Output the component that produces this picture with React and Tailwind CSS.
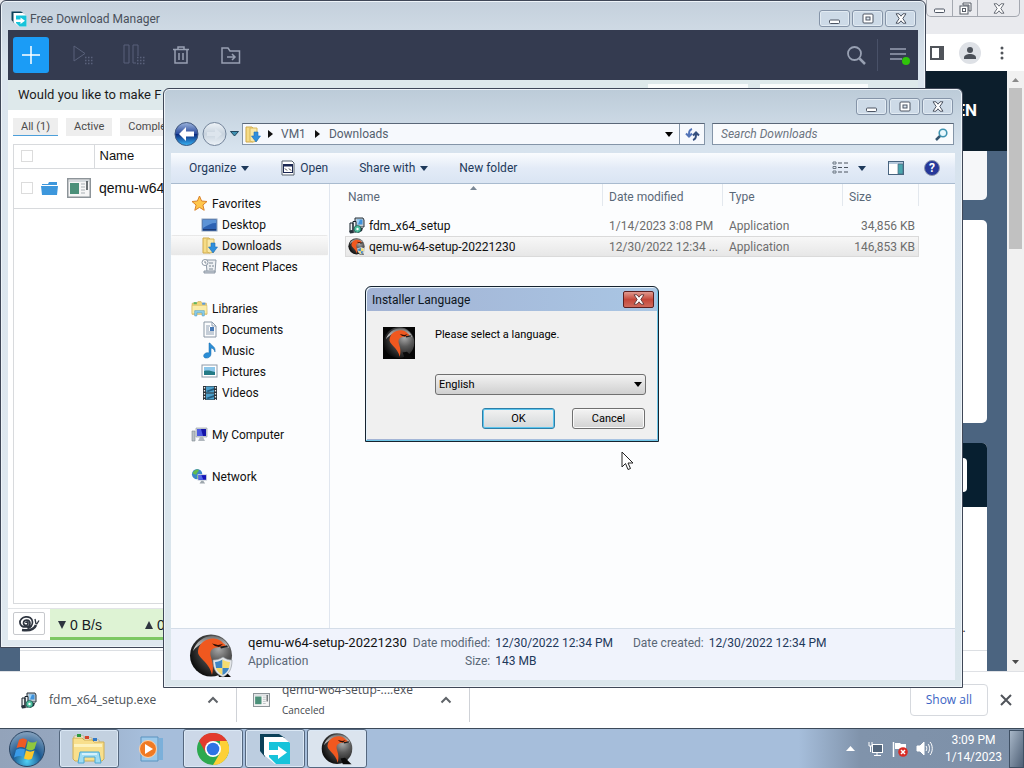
import React from "react";

const QemuLogo = ({ size, shield, square }) => (
  <svg width={size} height={size} viewBox="0 0 44 44" aria-hidden="true" className="shrink-0">
    <defs>
      <radialGradient id="qemuBall" cx="0.68" cy="0.35" r="0.7">
        <stop offset="0" stopColor="#a8a8a8" />
        <stop offset="0.4" stopColor="#5a5a5a" />
        <stop offset="1" stopColor="#101010" />
      </radialGradient>
      <linearGradient id="qemuShine" x2="0" y2="1">
        <stop offset="0" stopColor="#6f6f6f" />
        <stop offset="1" stopColor="#e6e6e6" />
      </linearGradient>
    </defs>
    {square && <rect width="44" height="44" fill="#050505" />}
    <circle cx="22" cy="21.500" r="21" fill="url(#qemuBall)" />
    <path d="M4 17C7 7 16 1.500 24 2c8 .6 14 5 16 12-3-2-5-3-7-4-9-5-21-3-29 7z" fill="url(#qemuShine)" />
    <path d="M27 35l6-1 9 9H30z" fill="#0a0a0a" />
    <path d="M9 17C10 9 17 4 25 4.500c4 .3 7 2 9 4.500l3 2.500-6 1.500c-5 .3-8.500 1.500-9.500 5-.8 3 1 6 2 11 .8 4 .5 8-.5 12-1.500-7-5-11-9-15-3.500-3.500-5.500-6-5-9z" fill="#f0581f" />
    <path d="M23 9.500l6 1.500 5-1-4 3-4-1z" fill="#2a0d05" />
    <path d="M31 12.500c3-.3 5-.6 7-1.200l1 1.500-7 1.800z" fill="#1c1c1c" />
    {shield && (
      <g>
        <path d="M24 26c4 0 7-1 10-3 3 2 5 3 9 3 0 9-3 14-9 17-7-3-10-8-10-17z" fill="#e4e6e8" stroke="#8b9299" strokeWidth=".6" />
        <path d="M26 28c3 0 5-1 7.500-2.500V34H27z" fill="#3f86c4" />
        <path d="M33.500 25.500c2 1.500 4.500 2.500 7.500 2.500l-1 6h-6.500z" fill="#f5dc70" />
        <path d="M27 34h6.500v7c-3-1.500-5.500-4-6.500-7z" fill="#f5dc70" />
        <path d="M33.500 34H40c-1 3-3 5.500-6.500 7z" fill="#3f86c4" />
      </g>
    )}
  </svg>
);

const FdmLogo = ({ size }) => (
  <svg width={size} height={size} viewBox="0 0 32 32" aria-hidden="true" className="shrink-0">
    <path d="M1 1h19l6 4H6v19l-5-6z" fill="#0b4058" />
    <path d="M5 4h19l7 6v21H16L5 22z" fill="#fff" />
    <path d="M10 9h20l1 1v21H17l-7-7z" fill="#17c3da" />
    <path d="M10 17h9v-4l9 6.500-9 6.500v-4h-9z" fill="#fff" />
  </svg>
);

const FolderDown = () => (
  <svg width="16" height="17" viewBox="0 0 16 17" aria-hidden="true" className="shrink-0">
    <path d="M1 1h6l1 1v14H1z" fill="#f6dc86" stroke="#d0a94a" />
    <path d="M5 2h7v13l-4 1-3-1z" fill="#f9e8a8" stroke="#d7b75b" />
    <path d="M9 6h4v4h2.500l-4.500 6-4.500-6H9z" fill="#2f8fdd" stroke="#1e6fb8" strokeWidth=".6" />
  </svg>
);

const Star = () => (
  <svg width="17" height="17" viewBox="0 0 17 17" aria-hidden="true">
    <path d="M8.500 1l2.100 5 5.400.5-4.100 3.500 1.300 5.300-4.700-2.900-4.700 2.900 1.300-5.300L1 6.500 6.400 6z" fill="#ffc64b" stroke="#d9822b" />
  </svg>
);

const DesktopIcon = () => (
  <svg width="17" height="16" viewBox="0 0 17 16" aria-hidden="true">
    <rect x="1" y="2" width="15" height="12" fill="#2d62b3" stroke="#8ba0b8" />
    <path d="M2 3h13v3c-5 0-8 2-13 5z" fill="#5c93d6" />
    <path d="M2 12h13v1.500H2z" fill="#1b3b78" />
  </svg>
);

const RecentIcon = () => (
  <svg width="17" height="17" viewBox="0 0 17 17" aria-hidden="true">
    <path d="M5 2h10l-1 12H6z" fill="#edf0f3" stroke="#8d98a5" />
    <circle cx="4" cy="4.500" r="3" fill="#fff" stroke="#8d98a5" />
    <path d="M4 3v2h1.500M8 5h4M8 8h2M11 8h2M8 11h4" stroke="#7d8894" fill="none" />
    <path d="M3 13h11v2H3z" fill="#c9d0d8" stroke="#8d98a5" />
  </svg>
);

const LibrariesIcon = () => (
  <svg width="17" height="17" viewBox="0 0 32 32" aria-hidden="true">
    <path d="M2 6h9l2-3h6l1 3h9l1 21H2z" fill="#f1d577" stroke="#c9a244" />
    <path d="M5 4h6v4H5z" fill="#63b35c" />
    <path d="M21 5h6v4h-6z" fill="#5d9bdb" />
    <path d="M2 10h28v16H2z" fill="#fbeca9" stroke="#d6b558" />
    <path d="M7 30V20h18v10h-4v-6H11v6z" fill="#8fd0ee" stroke="#3d93c3" />
  </svg>
);

const ExplorerIcon = () => (
  <svg width="34" height="31" viewBox="0 0 34 31" aria-hidden="true">
    <path d="M2 3h10v4H2zM10 5h10v4H10zM17 7h10v4H17z" fill="#fff" stroke="#b5a878" strokeWidth=".8" />
    <path d="M5 1h4v3H5z" fill="#2c9a3f" />
    <path d="M13 3h4v3h-4z" fill="#d4452c" />
    <path d="M21 5h4v3h-4z" fill="#2f78c8" />
    <path d="M1 5h9l2 2h8l2 2h10v17l-2 2H3l-2-2z" fill="#f8df8c" stroke="#cfae55" />
    <path d="M2 11h28v3H2z" fill="#fdf2bd" />
    <path d="M6 30l2-11h19l2 11h-6v-6H12v6z" fill="#9fdcf3" stroke="#4aa8d3" />
    <path d="M10 21h15" stroke="#e7f8fe" strokeWidth="1.500" />
  </svg>
);

const DocumentsIcon = () => (
  <svg width="16" height="17" viewBox="0 0 16 17" aria-hidden="true">
    <path d="M2 1h8l4 4v11H2z" fill="#fbfcfd" stroke="#8a97a5" />
    <path d="M10 1v4h4M4 5h4M4 7h3M4 9h3M4 11h8M4 13h8" stroke="#8fa0b3" fill="none" />
    <path d="M8 6h4v4H8z" fill="#4779b5" />
  </svg>
);

const MusicIcon = () => (
  <svg width="16" height="17" viewBox="0 0 16 17" aria-hidden="true">
    <path d="M8 1c1 3 6 3 5 9-1-3-2-3.500-4-4v6c0 3-3 4.500-5.500 4S1 12 4 11c1-.5 2-.5 3 0V1z" fill="#2b8ed6" stroke="#1969a8" strokeWidth=".5" />
  </svg>
);

const PicturesIcon = () => (
  <svg width="17" height="15" viewBox="0 0 17 15" aria-hidden="true">
    <rect x="1" y="1" width="15" height="12" fill="#fff" stroke="#8b99a8" />
    <path d="M3 3h11v5H3z" fill="#8cc7ea" />
    <path d="M3 7c4-1 7 0 11 1v3H3z" fill="#237a86" />
  </svg>
);

const VideosIcon = () => (
  <svg width="16" height="16" viewBox="0 0 16 16" aria-hidden="true">
    <rect x="1" y="1" width="14" height="14" fill="#2c3238" />
    <path d="M4 1.500h8v6H4zM4 8.500h8v6H4z" fill="#4d9fca" />
    <path d="M2.500 2v13M13.500 2v13" stroke="#e8ecef" strokeWidth="1.300" strokeDasharray="1.500 1.500" />
    <path d="M4 6l8-3v2L6 7zM4 13l8-3v2l-6 2z" fill="#215a7c" />
  </svg>
);

const ComputerIcon = () => (
  <svg width="17" height="16" viewBox="0 0 17 16" aria-hidden="true">
    <path d="M1 4h3v10H1z" fill="#b9c0c6" stroke="#7e878f" strokeWidth=".6" />
    <path d="M5 1h11v9H5z" fill="#d5dade" stroke="#8a939b" strokeWidth=".6" />
    <path d="M6 2h9v7H6z" fill="#1414a8" />
    <path d="M6 2h4l2 7H6z" fill="#4d5be0" />
    <path d="M9 10h3l2 4H7z" fill="#b1b8be" />
  </svg>
);

const NetworkIcon = () => (
  <svg width="17" height="17" viewBox="0 0 18 17" aria-hidden="true">
    <circle cx="6.500" cy="6" r="5.500" fill="#3b86c9" />
    <path d="M2 4c2-3 5-3 6-3 1 2-2 3-2 5-2 1-4 0-4-2zM6 8c2-1 4 0 4 2l-3 1z" fill="#63bd4c" />
    <path d="M7 6h10v7H7z" fill="#cfd6dc" />
    <path d="M8 7h8v5H8z" fill="#1414b8" />
    <path d="M8 7h3l2 5H8z" fill="#5369e6" />
    <path d="M11 13h2l2 3H9z" fill="#9da6ad" />
  </svg>
);

const InstallerIcon = ({ size = 17 }) => (
  <svg width={size} height={size} viewBox="0 0 17 17" aria-hidden="true" className="shrink-0">
    <path d="M7 1h8l1 2v7H7z" fill="#c3cdd4" stroke="#26323c" />
    <path d="M9 2.500h5.500v5H9z" fill="#3f93dd" />
    <path d="M9 2.500h3l-2 5H9z" fill="#9bd0f5" />
    <path d="M2 6h3v8H2zM5 4.500h3V15H5z" fill="#eef1f2" stroke="#15202a" />
    <path d="M1 14l3-1 2 3-4 .5zM11 11h4l-1 3-4 2z" fill="#26323c" />
    <circle cx="9.500" cy="12" r="3.500" fill="#4fc0a0" stroke="#1d5c52" strokeWidth=".8" />
    <circle cx="9.500" cy="12" r="1.200" fill="#fff" />
  </svg>
);

const AppPage = ({ w = 17, h = 14 }) => (
  <svg width={w} height={h} viewBox="0 0 24 20" preserveAspectRatio="none" aria-hidden="true" className="shrink-0">
    <rect x=".75" y=".75" width="22.500" height="18.500" fill="#f6f6f6" stroke="#8d9499" strokeWidth="1.500" />
    <path d="M2 2h20v2H2z" fill="#d6dbde" />
    <path d="M3 5h9v11H3z" fill="#4b9079" />
    <path d="M14 6h4M14 9h4M14 12h4M14 15h4" stroke="#aab1b5" />
    <path d="M20 3v9" stroke="#3d4449" strokeWidth="1.500" />
  </svg>
);

const Caret = ({ className = "text-[#1e395b]" }) => (
  <svg width="8" height="5" viewBox="0 0 8 5" aria-hidden="true" className={className}>
    <path d="M0 0h8L4 5z" fill="currentColor" />
  </svg>
);

const RightCaret = () => (
  <svg width="5" height="8" viewBox="0 0 5 8" aria-hidden="true">
    <path d="M0 0l5 4-5 4z" fill="#111" />
  </svg>
);

const MinGlyph = () => (
  <svg width="13" height="12" viewBox="0 0 13 12" aria-hidden="true">
    <rect x="1.500" y="7" width="10" height="3.500" rx="1" fill="#fff" stroke="#4d5563" />
  </svg>
);
const MaxGlyph = () => (
  <svg width="12" height="11" viewBox="0 0 12 11" aria-hidden="true">
    <rect x="1" y="1" width="10" height="9" rx="1" fill="#fff" stroke="#4d5563" />
    <rect x="4" y="4" width="4" height="3" fill="#dce6f0" stroke="#4d5563" />
  </svg>
);
const CloseGlyph = ({ stroke = "#4d5563" }) => (
  <svg width="12" height="11" viewBox="0 0 12 11" aria-hidden="true">
    <path d="M1 .8h3l2 2.400L8 .8h3L7.800 5.500l3.200 4.700H8L6 7.800l-2 2.400H1l3.200-4.700z" fill="#fff" stroke={stroke} />
  </svg>
);
const RestoreGlyph = () => (
  <svg width="13" height="13" viewBox="0 0 13 13" aria-hidden="true">
    <path d="M4 1h8v8h-2V3H4z" fill="#fff" stroke="#565c66" />
    <rect x="1" y="4" width="8" height="8" fill="#fff" stroke="#565c66" />
    <rect x="3.500" y="6.500" width="3" height="3" fill="none" stroke="#565c66" />
  </svg>
);

const frameButton =
  "flex h-[17px] w-[31px] items-center justify-center rounded-[3px] border border-[#8594a8] bg-[#cddae7] shadow-[inset_0_0_0_1px_#e2ebf3]";

const FrameButtons = () => (
  <div className="flex gap-[2px]">
    <button type="button" aria-label="Minimize" className={frameButton}><MinGlyph /></button>
    <button type="button" aria-label="Maximize" className={frameButton}><MaxGlyph /></button>
    <button type="button" aria-label="Close" className={frameButton}><CloseGlyph /></button>
  </div>
);

function BrowserWindow() {
  return (
    <div className="flex min-h-0 flex-1 flex-col bg-white">
      <div className="flex h-[34px] shrink-0 items-start justify-end bg-[#e9eaee] pr-1">
        <div className="flex h-[17px] rounded-b-[5px] border border-t-0 border-[#a4a8b0] text-[#565c66]">
          <button type="button" aria-label="Minimize browser" className="flex w-[25px] items-center justify-center"><MinGlyph /></button>
          <button type="button" aria-label="Restore browser" className="flex w-[26px] items-center justify-center border-x border-[#a4a8b0]"><RestoreGlyph /></button>
          <button type="button" aria-label="Close browser" className="flex w-[41px] items-center justify-center"><CloseGlyph stroke="#6a6f78" /></button>
        </div>
      </div>
      <div className="flex h-[37px] shrink-0 items-center justify-end gap-[15px] pr-5">
        <button type="button" aria-label="Side panel">
          <svg width="14" height="14" viewBox="0 0 14 14"><rect x="1" y="1" width="12" height="12" fill="#fff" stroke="#50545a" strokeWidth="2" /><path d="M9 1h4v12H9z" fill="#50545a" /></svg>
        </button>
        <button type="button" aria-label="Profile" className="flex size-[22px] items-center justify-center rounded-full bg-[#dee1e6]">
          <svg width="14" height="14" viewBox="0 0 14 14"><circle cx="7" cy="4" r="3" fill="#4b5058" /><path d="M1 12c0-3 3-4 6-4s6 1 6 4v1H1z" fill="#4b5058" /></svg>
        </button>
        <button type="button" aria-label="Browser menu" className="pl-[4px]">
          <svg width="4" height="14" viewBox="0 0 4 14"><circle cx="2" cy="2" r="1.500" fill="#50545a" /><circle cx="2" cy="7" r="1.500" fill="#50545a" /><circle cx="2" cy="12" r="1.500" fill="#50545a" /></svg>
        </button>
      </div>
      <div className="flex min-h-0 flex-1">
        <div className="flex min-w-0 flex-1 flex-col overflow-hidden bg-[#4b6480]">
          <div className="flex h-20 shrink-0 items-center justify-end bg-[#0c1e2c] pr-[30px] text-[17px] font-bold text-white">EN</div>
          <div className="flex flex-1 flex-col gap-5 pr-5 pl-5">
            <div className="h-[49px] shrink-0 rounded-b-[5px] bg-[#f6f7f9]" />
            <div className="h-[203px] shrink-0 rounded-[5px] bg-white" />
            <div className="flex flex-1 flex-col overflow-hidden rounded-t-[5px] bg-white">
              <div className="flex h-16 shrink-0 items-center justify-end bg-[#071f30] pr-5">
                <div className="h-[34px] w-24 rounded-[4px] bg-white" />
              </div>
              <div className="flex flex-1 items-end justify-end border-b border-[#dcdfe3] pr-[21px] pb-[12px] text-[14px] text-[#333]">.</div>
              <div className="h-5 shrink-0" />
            </div>
          </div>
        </div>
        <div className="flex w-[17px] shrink-0 flex-col items-center bg-[#f1f1f1]">
          <svg width="9" height="17" viewBox="0 0 9 17"><path d="M1 11l3.500-4L8 11z" fill="#8b8b8b" /></svg>
          <div className="h-[161px] w-[13px] bg-[#c1c1c1]" />
          <svg width="9" height="17" viewBox="0 0 9 17" className="mt-auto"><path d="M1 6h7l-3.500 4z" fill="#4a4a4a" /></svg>
        </div>
      </div>
      <div className="flex h-[57px] shrink-0 items-center border-t border-[#dfe1e5] pr-[12px] font-['Open_Sans',sans-serif] text-[12px] text-[#4c5157]">
        <div className="my-[7px] flex h-[44px] w-[237px] items-center border-r border-[#cfd2d7] pr-[17px] pl-5">
          <InstallerIcon />
          <a href="#fdm" className="ml-[12px] flex-1">fdm_x64_setup.exe</a>
          <button type="button" aria-label="Options for fdm_x64_setup.exe">
            <svg width="12" height="8" viewBox="0 0 12 8"><path d="M1.500 6.500L6 2l4.500 4.500" fill="none" stroke="#5f6368" strokeWidth="2" /></svg>
          </button>
        </div>
        <div className="flex h-[44px] w-[233px] items-center border-r border-[#cfd2d7] pr-[17px] pl-4">
          <AppPage w={17} h={14} />
          <div className="ml-[12px] flex flex-1 flex-col">
            <a href="#qemu" className="leading-5">qemu-w64-setup-....exe</a>
            <span className="text-[10px] leading-5 text-[#44484d]">Canceled</span>
          </div>
          <button type="button" aria-label="Options for qemu setup">
            <svg width="12" height="8" viewBox="0 0 12 8"><path d="M1.500 6.500L6 2l4.500 4.500" fill="none" stroke="#5f6368" strokeWidth="2" /></svg>
          </button>
        </div>
        <button type="button" className="ml-auto h-8 rounded-[4px] border border-[#d6d9de] px-[15px] text-[#3b64c4]">Show all</button>
        <button type="button" aria-label="Close downloads bar" className="ml-[12px]">
          <svg width="12" height="12" viewBox="0 0 12 12"><path d="M1 1l10 10M11 1L1 11" stroke="#50545a" strokeWidth="2" /></svg>
        </button>
      </div>
    </div>
  );
}

const fdmTab = "h-[18px] bg-[#eeeeee] px-[8px] text-[11px] leading-[18px] text-[#4b4b4b]";

function DownloadManager() {
  return (
    <section aria-label="Free Download Manager" className="absolute top-0 right-[98px] bottom-[120px] left-0 flex flex-col overflow-hidden rounded-t-[6px] border border-[#3f4757] bg-linear-to-b from-[#c4d0dc] via-[#dbe5ee] via-10% to-[#dfe8ef] px-[7px] pb-[7px] shadow-[inset_0_0_0_1px_#eef4f9]">
      <header className="flex h-[29px] shrink-0 items-center pr-[2px]">
        <div className="ml-[3px] flex items-center gap-[3px] pt-[6px]">
          <FdmLogo size={16} />
          <h2 className="text-[12px] text-[#4a515c]">Free Download Manager</h2>
        </div>
        <div className="ml-auto pt-[6px]"><FrameButtons /></div>
      </header>
      <div className="flex h-[50px] shrink-0 items-center bg-[#343b50] pr-[8px] pl-[5px]">
        <button type="button" aria-label="Add download" className="flex size-9 items-center justify-center rounded-[3px] bg-[#1b9cf6]">
          <svg width="18" height="18" viewBox="0 0 18 18"><path d="M9 0v18M0 9h18" stroke="#fff" strokeWidth="1.500" /></svg>
        </button>
        <button type="button" aria-label="Start" className="ml-[24px]">
          <svg width="20" height="22" viewBox="0 0 20 22" fill="none" stroke="#59617a"><path d="M1 2v15l11-7.500z" /><path d="M12 13.500h8M12 16.500h8M12 19.500h8" strokeWidth="1.500" strokeDasharray="1.500 1.500" /></svg>
        </button>
        <button type="button" aria-label="Pause" className="ml-[30px]">
          <svg width="22" height="22" viewBox="0 0 22 22" fill="none" stroke="#59617a"><path d="M1 1h5v18H1zM10 19V1h5v11M10 19h3" /><path d="M14 13.500h8M14 16.500h8M14 19.500h8" strokeWidth="1.500" strokeDasharray="1.500 1.500" /></svg>
        </button>
        <button type="button" aria-label="Delete" className="ml-[28px]">
          <svg width="16" height="18" viewBox="0 0 16 18" fill="none" stroke="#98a0b2" strokeWidth="1.500"><path d="M0 3.500h16M5 3V1h6v2M2 4v13h12V4M6 7v7M10 7v7" /></svg>
        </button>
        <button type="button" aria-label="Move to folder" className="ml-[32px]">
          <svg width="20" height="17" viewBox="0 0 20 17" fill="none" stroke="#98a0b2" strokeWidth="1.500"><path d="M1 16V1h6l2 3h9.500v12zM6 10h8M11 7l3 3-3 3" /></svg>
        </button>
        <button type="button" aria-label="Search downloads" className="ml-auto">
          <svg width="19" height="19" viewBox="0 0 19 19" fill="none" stroke="#98a0b2"><circle cx="7.500" cy="7.500" r="6.500" strokeWidth="1.800" /><path d="M12.500 12.500l5.500 5.500" strokeWidth="2.500" /></svg>
        </button>
        <div className="mr-[12px] ml-[11px] h-8 w-px bg-[#495168]" />
        <button type="button" aria-label="Menu">
          <svg width="20" height="20" viewBox="0 0 20 20"><path d="M0 4h16M0 9h16M0 14h12" stroke="#98a0b2" strokeWidth="1.500" /><circle cx="16" cy="16" r="4" fill="#2fc40a" /></svg>
        </button>
      </div>
      <div className="flex h-[30px] shrink-0 items-start justify-between bg-[#dee9eb] pr-[50px] pl-[10px] text-[13px] leading-[30px] text-[#1c1c1c]">
        <p className="whitespace-nowrap">Would you like to make F</p>
        <div className="flex gap-[12px] pt-1">
          <button type="button" aria-label="Yes" className="h-5 w-[100px] bg-[#fafcfc]" />
          <button type="button" aria-label="No" className="h-5 w-[108px] bg-[#fafcfc]" />
        </div>
      </div>
      <div className="flex min-h-0 flex-1 flex-col bg-white px-[5px] pt-[8px]">
        <div className="flex gap-[8px] whitespace-nowrap">
          <button type="button" className={fdmTab + " border-b border-[#4c9fda]"}>All (1)</button>
          <button type="button" className={fdmTab}>Active</button>
          <button type="button" className={fdmTab}>Complete</button>
        </div>
        <div className="mt-2 flex-1 border border-[#d8dadd]">
          <table className="w-full text-left font-['Liberation_Sans',sans-serif] text-[14px] text-[#111]">
            <thead>
              <tr className="h-[23px] border-b border-[#d8dadd]">
                <th className="w-[80px] border-r border-[#d8dadd] pl-[7px]"><input type="checkbox" aria-label="Select all" className="block size-3 appearance-none border border-[#dcdcdc]" /></th>
                <th className="pl-[5px] text-[13px] leading-[22px] font-normal">Name</th>
              </tr>
            </thead>
            <tbody>
              <tr className="h-10 border-b border-[#d8dadd]">
                <td className="pl-[7px]">
                  <div className="flex items-center">
                    <input type="checkbox" aria-label="Select qemu-w64-setup" className="size-3 appearance-none border border-[#dcdcdc]" />
                    <svg width="18" height="16" viewBox="0 0 18 16" className="ml-[8px]" aria-hidden="true"><path d="M1 4h6l1-2h8v3H1zM0 6h17l-1 9H1z" fill="#3d97dc" /></svg>
                    <span className="ml-[8px]"><AppPage w={24} h={20} /></span>
                  </div>
                </td>
                <td className="pl-[5px] whitespace-nowrap">qemu-w64</td>
              </tr>
            </tbody>
          </table>
        </div>
        <div className="-mx-[5px] mt-1 flex h-[32px] shrink-0 items-start border-t border-[#e2e4e7] pl-[5px]">
          <button type="button" aria-label="Snail mode" className="mt-[3px] flex h-[23px] w-8 items-center justify-center rounded-[2px] border border-[#c7c9cd] bg-white">
            <svg width="22" height="17" viewBox="0 0 22 17" fill="none" stroke="#2e3540"><path d="M8 8c0-1.500 2-1 2 .5 0 2.500-4.500 2.500-4.500-.5C5.500 4 12 4 12 8.500 12 13 3 13.500 2 8 1 1 14-1 14.500 7c0 3-2 5.500-5 6.500" strokeWidth="1.700" /><path d="M4 15c7 1 12 0 14-5" strokeWidth="2.500" /><path d="M18 9l-1-5M18.500 9.500l2.500-4" strokeWidth="1.300" /></svg>
          </button>
          <div className="ml-[5px] flex h-[31px] flex-1 items-center border-b-[3px] border-[#7cc862] bg-[#def3d4] pt-[4px] pl-[8px] font-['Liberation_Sans',sans-serif] text-[14px] text-[#15191f]">
            <svg width="8" height="8" viewBox="0 0 8 8" className="mr-[4px]" aria-hidden="true"><path d="M0 0h8L4 8z" fill="#2e3540" /></svg>0 B/s
            <svg width="8" height="8" viewBox="0 0 8 8" className="mr-[4px] ml-[43px]" aria-hidden="true"><path d="M0 8h8L4 0z" fill="#2e3540" /></svg>0 B/s
          </div>
        </div>
      </div>
    </section>
  );
}

const navItem = "flex h-[21px] items-center gap-[4px] border border-transparent text-[12px] text-[#111]";

const NavRow = ({ icon, label, level = 1, active }) => (
  <a href={"#" + label} className={navItem + (level === 1 ? " pl-[29px]" : " pl-[19px]") + (active ? " rounded-[2px] border-[#dcdcdc] bg-linear-to-b from-[#fafafa] to-[#e8e8e8]" : "")}>
    <span className="flex w-[17px] justify-center">{icon}</span>
    {label}
  </a>
);

const files = [
  { name: "fdm_x64_setup", date: "1/14/2023 3:08 PM", size: "34,856 KB", icon: <InstallerIcon /> },
  { name: "qemu-w64-setup-20221230", date: "12/30/2022 12:34 ...", size: "146,853 KB", icon: <QemuLogo size={17} shield />, selected: true },
];

const th = "relative border-r border-[#e3e8ee] pt-[4px] font-normal";

function Explorer() {
  return (
    <section aria-label="Downloads" className="absolute top-[88px] right-[61px] bottom-[80px] left-[163px] flex flex-col overflow-hidden rounded-t-[6px] border border-[#3f4757] bg-linear-to-b from-[#bccbd8] via-[#d7e3ee] via-10% to-[#dbe6ec] px-[7px] pb-[7px] shadow-[inset_0_0_0_1px_#eef4f9]">
      <header className="flex h-[34px] shrink-0 justify-end pt-[9px] pr-[2px]"><FrameButtons /></header>
      <div className="flex h-[30px] shrink-0 items-start gap-[7px] pr-px">
        <div className="-mt-[3px] -mr-[4px] flex h-[28px] shrink-0 items-center pl-[3px]">
          <button type="button" aria-label="Back">
            <svg width="25" height="26" viewBox="0 0 25 26">
              <defs><linearGradient id="backFill" x2="0" y2="1"><stop offset="0" stopColor="#9db5de" /><stop offset=".48" stopColor="#2c4d9e" /><stop offset=".52" stopColor="#0c2c80" /><stop offset="1" stopColor="#36b4f5" /></linearGradient></defs>
              <circle cx="12.500" cy="13" r="11.500" fill="url(#backFill)" stroke="#42597f" /><path d="M5 13l7-7v4.500h8v5h-8V20z" fill="#fff" />
            </svg>
          </button>
          <button type="button" aria-label="Forward" className="ml-[3px]">
            <svg width="25" height="26" viewBox="0 0 25 26">
              <defs><linearGradient id="fwdFill" x2="0" y2="1"><stop offset="0" stopColor="#eff4f8" /><stop offset=".5" stopColor="#c8d3de" /><stop offset="1" stopColor="#edf3f8" /></linearGradient></defs>
              <circle cx="12.500" cy="13" r="11.500" fill="url(#fwdFill)" stroke="#73849a" />
              <path d="M20 13l-7-6v4H5v4h8v4z" fill="#dde5ed" />
            </svg>
          </button>
          <button type="button" aria-label="Recent pages" className="ml-[3px]">
            <svg width="9" height="6" viewBox="0 0 9 6"><path d="M.5.5h8L4.500 5z" fill="#3f92b4" stroke="#22475e" /></svg>
          </button>
        </div>
        <div className="flex h-[22px] min-w-0 flex-1 items-center border border-[#8495a8] border-t-[#5a6778] bg-[#f6f9fd] pl-[2px] text-[12px] text-[#54606e]">
          <FolderDown />
          <span className="mr-[8px] ml-[7px]"><RightCaret /></span>VM1
          <span className="mx-[9px]"><RightCaret /></span>Downloads
          <button type="button" aria-label="Address history" className="ml-auto px-[6px]"><Caret className="text-black" /></button>
          <button type="button" aria-label="Refresh" className="flex h-full w-[25px] items-center justify-center border-l border-[#8495a8]">
            <svg width="15" height="13" viewBox="0 0 15 13" fill="none" strokeWidth="2"><path d="M7 1C4 2 4 4 4 8M1 5.500l3 3 3-3" stroke="#5274b8" /><path d="M8 12c3-1 3-3 3-7M8 7.500l3-3 3 3" stroke="#36507e" /></svg>
          </button>
        </div>
        <label className="flex h-[22px] w-[242px] shrink-0 items-center border border-[#8495a8] border-t-[#5a6778] bg-[#f9fbfd] pr-[5px] pl-[8px]">
          <input type="search" aria-label="Search Downloads" placeholder="Search Downloads" className="w-full min-w-0 flex-1 bg-transparent text-[12px] italic outline-none placeholder:text-[#6b7480]" />
          <svg width="13" height="13" viewBox="0 0 13 13" fill="none" aria-hidden="true"><path d="M1 12l4.500-4.500" stroke="#35556f" strokeWidth="2.500" /><circle cx="8" cy="5" r="3.800" fill="#e8f8fd" stroke="#3f93b0" strokeWidth="1.600" /></svg>
        </label>
      </div>
      <div className="flex h-[31px] shrink-0 items-center border-b border-[#a9bbcf] bg-linear-to-b from-[#fafcfe] via-[#e3ebf7] via-50% to-[#dae5f3] pr-[15px] pl-[18px] text-[12px] text-[#1e395b]">
        <button type="button" className="flex items-center gap-[5px]">Organize <Caret /></button>
        <button type="button" className="ml-8 flex items-center gap-[5px]">
          <svg width="14" height="16" viewBox="0 0 14 16" aria-hidden="true"><path d="M1 1h10l2 2v12H1z" fill="#fff" stroke="#56606c" /><rect x="2.500" y="4.500" width="9" height="8" fill="#fff" stroke="#1c2853" /><path d="M2.500 4.500h9v2h-9z" fill="#1c2853" /><path d="M4 8.500l2 2M8 8.500l2 2" stroke="#333" /></svg>
          Open
        </button>
        <button type="button" className="ml-[31px] flex items-center gap-[5px]">Share with <Caret /></button>
        <button type="button" className="ml-[31px]">New folder</button>
        <button type="button" aria-label="Change view" className="ml-auto flex items-center gap-[10px]">
          <svg width="16" height="14" viewBox="0 0 16 14" fill="none" stroke="#6d7884"><path d="M1 1h3v2H1zM1 5.500h3v2H1zM1 10h3v2H1z" /><path d="M6 2h4M12 2h4M6 6.500h4M12 6.500h4M6 11h4M12 11h4" stroke="#4a535e" /></svg>
          <Caret />
        </button>
        <button type="button" aria-label="Preview pane" className="ml-[22px]">
          <svg width="16" height="14" viewBox="0 0 16 14"><rect x=".5" y=".5" width="15" height="13" fill="#fff" stroke="#49647f" /><path d="M1 1h14v2H1z" fill="#b6c9dc" /><path d="M10 3h5v10h-5z" fill="#4aa5ad" stroke="#49647f" strokeWidth=".7" /></svg>
        </button>
        <button type="button" aria-label="Help" className="ml-5 flex size-4 items-center justify-center rounded-full border border-[#8d96ad] bg-[#26389a] text-[12px] leading-4 font-bold text-white">?</button>
      </div>
      <div className="flex min-h-0 flex-1 bg-[#fcfdfe]">
        <nav aria-label="Folders" className="flex w-[159px] shrink-0 flex-col border-r border-[#e0e6ef] pt-[9px] pr-px">
          <NavRow level={0} icon={<Star />} label="Favorites" />
          <NavRow icon={<DesktopIcon />} label="Desktop" />
          <NavRow icon={<FolderDown />} label="Downloads" active />
          <NavRow icon={<RecentIcon />} label="Recent Places" />
          <div className="h-[21px]" />
          <NavRow level={0} icon={<LibrariesIcon />} label="Libraries" />
          <NavRow icon={<DocumentsIcon />} label="Documents" />
          <NavRow icon={<MusicIcon />} label="Music" />
          <NavRow icon={<PicturesIcon />} label="Pictures" />
          <NavRow icon={<VideosIcon />} label="Videos" />
          <div className="h-[21px]" />
          <NavRow level={0} icon={<ComputerIcon />} label="My Computer" />
          <div className="h-[21px]" />
          <NavRow level={0} icon={<NetworkIcon />} label="Network" />
        </nav>
        <div className="min-w-0 flex-1 pr-9 pl-[15px]">
          <table className="w-full table-fixed border-separate border-spacing-0 text-left text-[12px] whitespace-nowrap text-[#6d6d6d]">
            <colgroup><col /><col className="w-[120px]" /><col className="w-[120px]" /><col className="w-[76px]" /></colgroup>
            <thead>
              <tr className="h-[21px] text-[#5a6878]">
                <th className={th + " pl-[3px]"}>
                  Name
                  <svg width="7" height="4" viewBox="0 0 7 4" className="absolute top-[2px] left-1/2 -ml-1" aria-hidden="true"><path d="M0 4l3.500-4L7 4z" fill="#7b8896" /></svg>
                </th>
                <th className={th + " pl-[6px]"}>Date modified</th>
                <th className={th + " pl-[6px]"}>Type</th>
                <th className={th + " pl-[6px]"}>Size</th>
              </tr>
              <tr className="h-[9px]"><td colSpan={4} /></tr>
            </thead>
            <tbody>
              {files.map((f) => (
                <tr key={f.name} className={"h-[21px] " + (f.selected ? "bg-linear-to-b from-[#f8f8f8] to-[#e6e6e6] outline outline-[#dadada] -outline-offset-1" : "")}>
                  <td className="pl-[3px]"><span className="flex items-center gap-[4px] text-[#111]">{f.icon}{f.name}</span></td>
                  <td className="pl-[6px]">{f.date}</td>
                  <td className="pl-[6px]">Application</td>
                  <td className="pr-[4px] text-right">{f.size}</td>
                </tr>
              ))}
            </tbody>
          </table>
        </div>
      </div>
      <footer className="flex h-[52px] shrink-0 items-start border-t border-[#d4dde8] bg-[#f0f3fc] pt-[5px] pl-[18px] text-[12px] leading-[18px] whitespace-nowrap text-[#5a6776]">
        <QemuLogo size={44} shield />
        <div className="ml-[15px]">
          <p className="text-[13px] text-[#111]">qemu-w64-setup-20221230</p>
          <p>Application</p>
        </div>
        <dl className="ml-[6px] grid grid-cols-[auto_auto] gap-x-[5px]">
          <dt className="text-right">Date modified:</dt><dd className="text-[#1e395b]">12/30/2022 12:34 PM</dd>
          <dt className="text-right">Size:</dt><dd className="text-[#1e395b]">143 MB</dd>
        </dl>
        <dl className="ml-5 flex gap-[5px]">
          <dt>Date created:</dt><dd className="text-[#1e395b]">12/30/2022 12:34 PM</dd>
        </dl>
      </footer>
    </section>
  );
}

function LanguageDialog() {
  return (
    <section role="dialog" aria-label="Installer Language" className="absolute top-[286px] left-[365px] w-[294px] rounded-t-[6px] border border-[#16232f] bg-linear-to-r from-[#a3b3d4] to-[#a9c6e4] px-px pb-[2px] shadow-[inset_-1px_-1px_0_#6fc7e8,inset_1px_1px_0_#e8f3fb]">
      <header className="flex h-[24px] items-center justify-between pr-[3px] pl-[5px]">
        <h2 className="pt-px text-[12px] text-[#0e1620]">Installer Language</h2>
        <button type="button" aria-label="Close dialog" className="flex h-[17px] w-[31px] items-center justify-center rounded-[2px] border border-[#5c2020] bg-linear-to-b from-[#e09a90] via-[#c4473a] via-50% to-[#cf6a5c]"><CloseGlyph stroke="#6b4040" /></button>
      </header>
      <div className="bg-[#f0f0f0] px-[11px] pt-4 pb-[10px] text-[11px] text-black">
        <div className="flex gap-5 pl-[5px]">
          <QemuLogo size={32} square />
          <label htmlFor="lang">Please select a language.</label>
        </div>
        <div className="relative mt-[15px] ml-[57px]">
          <select id="lang" className="block h-[21px] w-full appearance-none rounded-[3px] border border-[#707070] bg-linear-to-b from-[#f2f2f2] to-[#d0d0d0] pt-[2px] pl-[3px] text-[11px]">
            <option>English</option>
          </select>
          <span className="pointer-events-none absolute top-2 right-1"><Caret className="text-black" /></span>
        </div>
        <div className="mt-[13px] flex justify-end gap-[17px] pr-px">
          <button type="button" className="h-[21px] w-[73px] rounded-[3px] border border-[#2d7fa8] bg-linear-to-b from-[#f2f2f2] to-[#d4d8da] pt-[2px] shadow-[inset_0_0_0_1px_#5cc5ee]">OK</button>
          <button type="button" className="h-[21px] w-[73px] rounded-[3px] border border-[#707070] bg-linear-to-b from-[#f4f4f4] to-[#d2d2d2] pt-[2px] shadow-[inset_0_0_0_1px_#fafafa]">Cancel</button>
        </div>
      </div>
    </section>
  );
}

const taskButton = "flex h-[39px] w-[60px] items-center justify-center rounded-[3px] border border-[#55677e] shadow-[inset_0_0_0_1px_#dbe8f5]";

function Taskbar() {
  return (
    <footer className="flex h-10 shrink-0 items-center border-t border-[#3c4a5a] bg-[linear-gradient(90deg,#93a3ba_0%,#95a6be_5%,#a6bedb_14%,#a6bedb_78%,#8093ab_84%,#7d90a8_100%)]">
      <button type="button" aria-label="Start menu" className="ml-[8px]">
        <svg width="38" height="38" viewBox="0 0 38 38">
          <defs><radialGradient id="orb" cx=".5" cy=".85" r=".8"><stop offset="0" stopColor="#4fd0f5" /><stop offset=".5" stopColor="#1c5a92" /><stop offset="1" stopColor="#7d9cba" /></radialGradient></defs>
          <circle cx="19" cy="19" r="17.500" fill="url(#orb)" stroke="#2b4563" />
          <path d="M11 10c3-2 5-2 8 0l-2 8c-3-1.500-5-1.500-8.500 0z" fill="#ee5a24" />
          <path d="M20 11c3 2 6 2 9 0l-2.500 8c-3 2-5 1.500-8.500 0z" fill="#8fc73e" />
          <path d="M8 20c3-2 6-2 9-.5L15 27c-3-1.500-6-1-9 .5z" fill="#3a9be8" />
          <path d="M18 20.500c3 1.500 5.500 1.500 8.500 0l-2.500 8c-3 2-5 1-8 0z" fill="#fcc82c" />
        </svg>
      </button>
      <button type="button" aria-label="File Explorer" className={taskButton + " ml-[13px] bg-[#c3d1e0]"}><ExplorerIcon /></button>
      <button type="button" aria-label="Media Player" className="flex w-[64px] justify-center">
        <svg width="28" height="26" viewBox="0 0 28 26"><path d="M4 1h17v24H4z" fill="#9cc9ea" stroke="#5b93bf" /><path d="M22 2h4v22h-4z" fill="#7bb0da" /><circle cx="11" cy="13" r="8.500" fill="#f07a23" stroke="#fbd3ad" /><path d="M8 8l8 5-8 5z" fill="#fff" /></svg>
      </button>
      <button type="button" aria-label="Chrome" className={taskButton + " bg-[#ccd8e8]"}>
        <svg width="32" height="32" viewBox="0 0 32 32">
          <circle cx="16" cy="16" r="16" fill="#2da94f" />
          <path d="M2.100 8A16 16 0 0 1 29.900 8H16L9 20z" fill="#e33b2e" />
          <path d="M29.900 8A16 16 0 0 1 16 32l7-12V8z" fill="#fdd037" />
          <circle cx="16" cy="16" r="8" fill="#fff" /><circle cx="16" cy="16" r="6.300" fill="#2f74e4" />
        </svg>
      </button>
      <button type="button" aria-label="Free Download Manager task" className={taskButton + " ml-[2px] bg-[#bccde0]"}><FdmLogo size={32} /></button>
      <button type="button" aria-label="QEMU setup task" className={taskButton + " ml-[2px] bg-[#dbe4ee]"}><QemuLogo size={32} /></button>
      <div className="ml-auto flex items-center">
        <svg width="9" height="5" viewBox="0 0 9 5" aria-hidden="true"><path d="M0 5h9L4.500 0z" fill="#fff" /></svg>
        <svg width="16" height="16" viewBox="0 0 16 16" className="ml-[13px]" fill="none" stroke="#fff" aria-hidden="true"><rect x="4.500" y="3.500" width="10" height="8" fill="#53667c" /><path d="M1 1v4h3V1M2.500 5v6M9 12v2M6 14.500h7" /></svg>
        <svg width="16" height="16" viewBox="0 0 16 16" className="ml-[8px]" aria-hidden="true"><path d="M1.500 1v15" stroke="#fff" strokeWidth="1.500" /><path d="M3 2h5l1 1h5v6H9L8 8H3z" fill="#fff" /><circle cx="11" cy="11" r="4.800" fill="#d92c25" /><path d="M9 9l4 4M13 9l-4 4" stroke="#fff" strokeWidth="1.500" /></svg>
        <svg width="17" height="15" viewBox="0 0 17 15" className="ml-[8px]" fill="none" stroke="#fff" aria-hidden="true"><path d="M1 5h3l4-4v13l-4-4H1z" fill="#fff" /><path d="M10 5c1 1 1 4 0 5M12 3c2 2 2 7 0 9M14 1c3 3 3 10 0 13" /></svg>
        <div className="ml-[5px] w-[71px] text-center text-[12px] leading-[17px] text-white"><div>3:09 PM</div><div>1/14/2023</div></div>
        <button type="button" aria-label="Show desktop" className="h-[38px] w-[15px] border border-[#3f5064] bg-linear-to-br from-[#a8b7c8] to-[#4f6076]" />
      </div>
    </footer>
  );
}

export default function App() {
  return (
    <main className="relative flex h-screen flex-col overflow-hidden font-[Roboto,'Liberation_Sans',sans-serif]">
      <BrowserWindow />
      <Taskbar />
      <DownloadManager />
      <Explorer />
      <LanguageDialog />
      <svg width="14" height="21" viewBox="0 0 14 21" className="pointer-events-none absolute top-[451px] left-[621px]" aria-hidden="true">
        <path d="M1 1v15l3.500-3.500L7 18.500l2.500-1L7 12h5z" fill="#fff" stroke="#222" />
      </svg>
    </main>
  );
}
